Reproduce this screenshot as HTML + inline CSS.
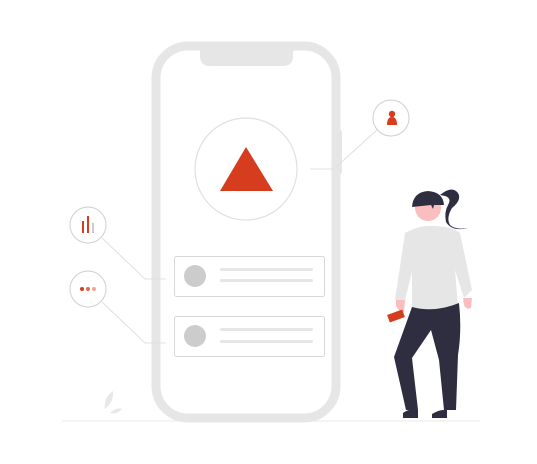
<!DOCTYPE html>
<html><head><style>html,body{margin:0;padding:0;background:#fff;width:537px;height:464px;overflow:hidden}</style></head>
<body>
<svg width="537" height="464" viewBox="0 0 537 464" xmlns="http://www.w3.org/2000/svg">
<line x1="62" y1="421" x2="480" y2="421" stroke="#f0f0f0" stroke-width="1.5"/>
<!-- phone -->
<rect x="156" y="46" width="180" height="372" rx="32" fill="#fff" stroke="#e6e6e6" stroke-width="9"/>
<path d="M200 46 H293 V56 Q293 66 283 66 H210 Q200 66 200 56 Z" fill="#e6e6e6"/>
<rect x="336" y="130" width="6" height="44" rx="2" fill="#e6e6e6"/>
<!-- big circle -->
<circle cx="246" cy="169" r="51" fill="#fff" stroke="#e0e0e0" stroke-width="1.2"/>
<polygon points="246,147 273,191 220,191" fill="#d63c1e"/>
<!-- connector right -->
<polyline points="310,169 334,169 378,129" fill="none" stroke="#e0e0e0" stroke-width="1"/>
<circle cx="391" cy="118" r="18" fill="#fff" stroke="#cfcfd4" stroke-width="1"/>
<circle cx="392" cy="114" r="3.2" fill="#d63c1e"/>
<path d="M387 125 Q387 117 392 117 Q397 117 397 125 Z" fill="#d63c1e"/>
<!-- left circles -->
<polyline points="102,238 145,279 166,279" fill="none" stroke="#e0e0e0" stroke-width="1"/>
<polyline points="102,302 145,343 166,343" fill="none" stroke="#e0e0e0" stroke-width="1"/>
<circle cx="88" cy="225" r="18" fill="#fff" stroke="#cfcfd4" stroke-width="1"/>
<rect x="82" y="221" width="2" height="12" fill="#d63c1e"/>
<rect x="87" y="216" width="2" height="17" fill="#d63c1e"/>
<rect x="92" y="223" width="2" height="10" fill="#ccc"/>
<circle cx="88" cy="289" r="18" fill="#fff" stroke="#cfcfd4" stroke-width="1"/>
<circle cx="82" cy="289" r="2" fill="#d63c1e"/>
<circle cx="88" cy="289" r="2" fill="#e06a4f"/>
<circle cx="94" cy="289" r="2" fill="#f0a594"/>
<!-- cards -->
<rect x="174.5" y="256.5" width="150" height="40" rx="2" fill="#fff" stroke="#d8d8d8"/>
<circle cx="195" cy="276" r="11" fill="#ccc"/>
<rect x="220" y="268" width="93" height="3" rx="1.5" fill="#e6e6e6"/>
<rect x="220" y="279" width="93" height="3" rx="1.5" fill="#e6e6e6"/>
<rect x="174.5" y="316.5" width="150" height="40" rx="2" fill="#fff" stroke="#d8d8d8"/>
<circle cx="195" cy="336" r="11" fill="#ccc"/>
<rect x="220" y="328" width="93" height="3" rx="1.5" fill="#e6e6e6"/>
<rect x="220" y="340" width="93" height="3" rx="1.5" fill="#e6e6e6"/>
<!-- leaves -->
<path d="M113 391 Q103 398 105 409 Q114 402 113 391Z" fill="#e8e8e8"/>
<path d="M110 413 Q116 407 122 409 Q117 415 110 413Z" fill="#e8e8e8"/>
<!-- woman -->
<path d="M440 195 Q452 185 458 193 Q462 200 452 208 Q446 218 450 225 Q455 230 468 228 Q452 232 446 222 Q444 212 448 205 Q452 198 445 196Z" fill="#2f2e41"/>
<circle cx="428" cy="208" r="13" fill="#fbbebe"/>
<path d="M412 207 Q413 192 428 191 Q443 192 444 205 L434 205 L433 209 L431 205 Z" fill="#2f2e41"/>
<path d="M405 233 Q420 225 432 226 Q452 226 460 233 L472 290 L464 298 L455 270 L458 306 Q440 315 412 308 L412 272 L405 300 L395 300 Z" fill="#e6e6e6"/>
<path d="M396 300 L405 300 L404 312 Q399 312 396 306Z" fill="#fbbebe"/>
<path d="M463 298 L472 298 L471 308 Q466 310 464 305Z" fill="#fbbebe"/>
<path d="M412 307 Q435 313 459 303 Q462 330 458 355 L456 410 L444 410 L439 360 L431 330 L412 358 L418 410 L406 410 L394 357 Z" fill="#2f2e41"/>
<path d="M403 413 Q410 408 418 410 L418 418 L403 418Z" fill="#2f2e41"/>
<path d="M432 414 Q440 409 447 410 L447 418 L432 418Z" fill="#2f2e41"/>
<rect x="388" y="312" width="16" height="8" transform="rotate(-20 396 316)" fill="#d63c1e"/>
</svg>
</body></html>
